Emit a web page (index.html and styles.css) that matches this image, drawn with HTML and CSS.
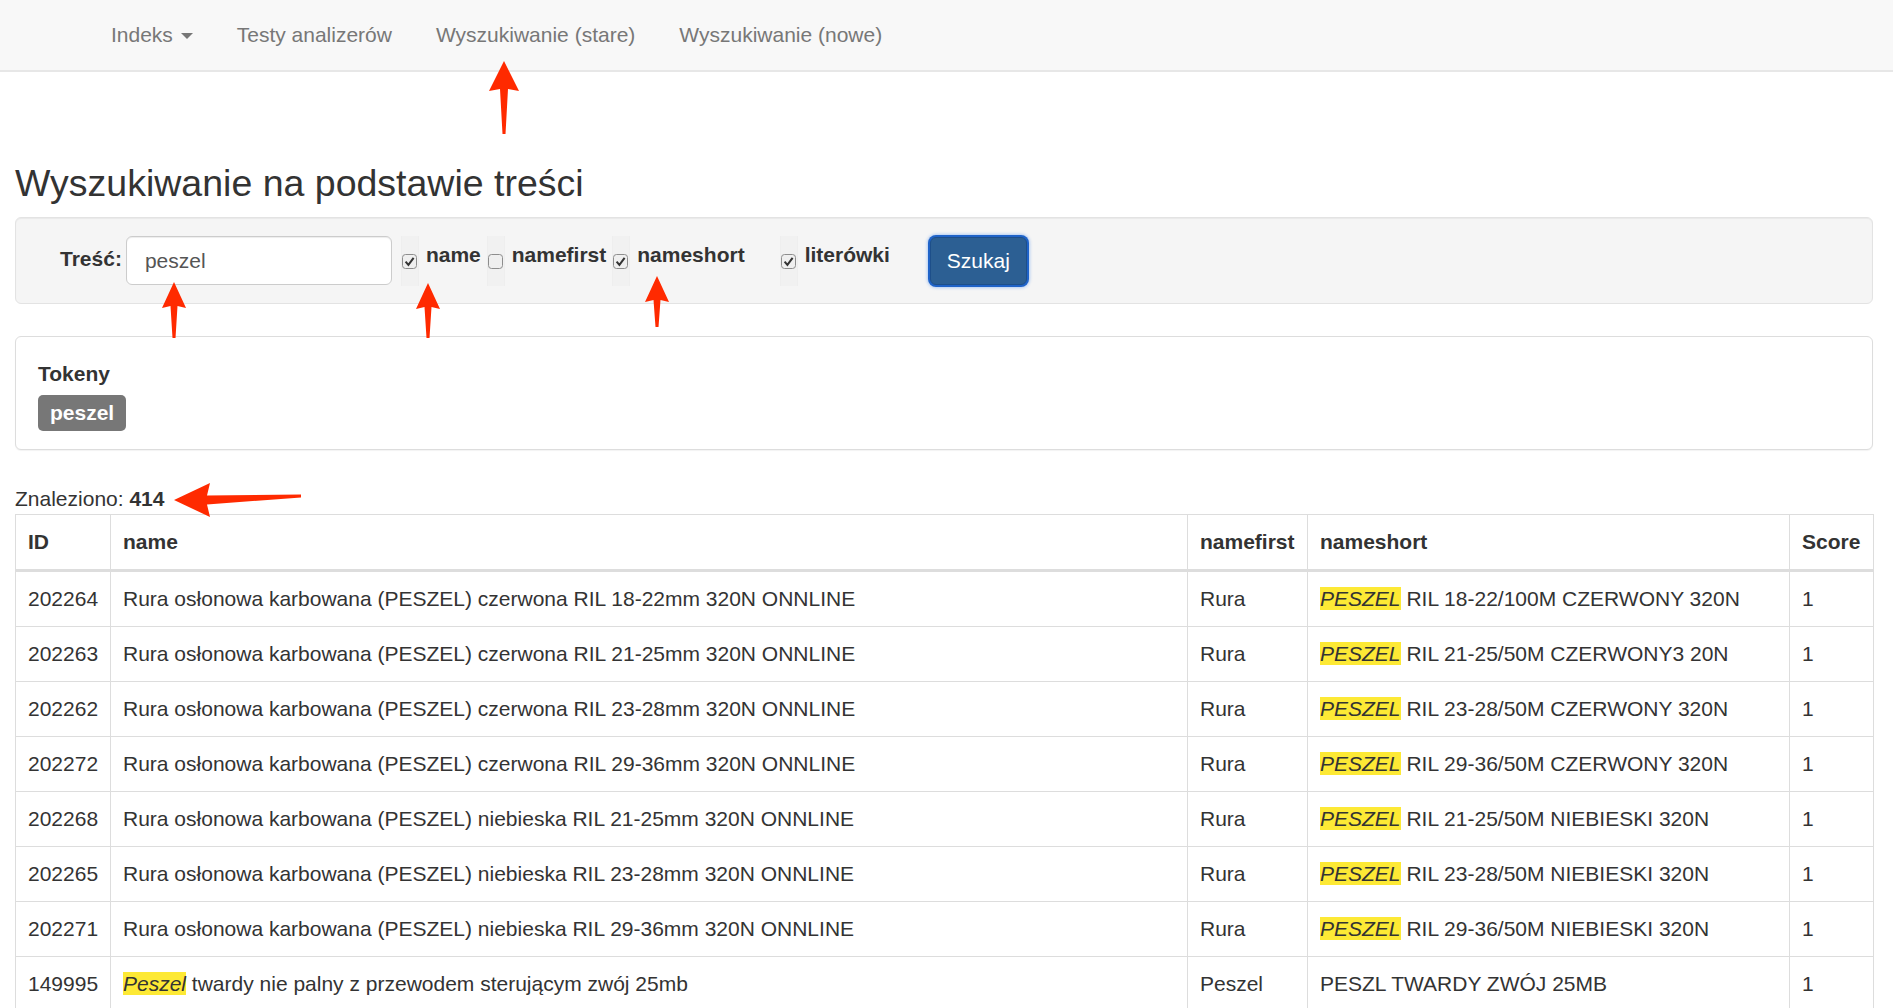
FILE: index.html
```html
<!DOCTYPE html>
<html lang="pl">
<head>
<meta charset="utf-8">
<title>Wyszukiwanie</title>
<link rel="stylesheet" href="styles.css">
</head>
<body>
<nav class="navbar">
  <ul class="nav">
    <li><a href="#">Indeks <span class="caret"></span></a></li>
    <li><a href="#">Testy analizerów</a></li>
    <li><a href="#">Wyszukiwanie (stare)</a></li>
    <li><a href="#">Wyszukiwanie (nowe)</a></li>
  </ul>
</nav>

<main class="page">
  <h3 class="title">Wyszukiwanie na podstawie treści</h3>

  <form class="well">
    <label class="lbl">Treść:</label>
    <div class="input">peszel</div>
    <span class="cbwrap"><svg class="cb" viewBox="0 0 15 15"><rect x=".5" y=".5" width="14" height="14" rx="3" fill="#efefef" stroke="#8d8d8d"/><path d="M3.6 7.6 L6.4 10.9 L11.6 3.9" fill="none" stroke="#333" stroke-width="2"/></svg></span>
    <span class="cblabel">name</span>
    <span class="cbwrap"><svg class="cb" viewBox="0 0 15 15"><rect x=".5" y=".5" width="14" height="14" rx="3" fill="#efefef" stroke="#8d8d8d"/></svg></span>
    <span class="cblabel">namefirst</span>
    <span class="cbwrap"><svg class="cb" viewBox="0 0 15 15"><rect x=".5" y=".5" width="14" height="14" rx="3" fill="#efefef" stroke="#8d8d8d"/><path d="M3.6 7.6 L6.4 10.9 L11.6 3.9" fill="none" stroke="#333" stroke-width="2"/></svg></span>
    <span class="cblabel wide">nameshort</span>
    <span class="cbwrap"><svg class="cb" viewBox="0 0 15 15"><rect x=".5" y=".5" width="14" height="14" rx="3" fill="#efefef" stroke="#8d8d8d"/><path d="M3.6 7.6 L6.4 10.9 L11.6 3.9" fill="none" stroke="#333" stroke-width="2"/></svg></span>
    <span class="cblabel wide">literówki</span>
    <button type="button" class="btn">Szukaj</button>
  </form>

  <section class="panel">
    <div class="panel-title">Tokeny</div>
    <span class="badge">peszel</span>
  </section>

  <p class="found">Znaleziono: <b>414</b></p>

  <table class="results">
    <colgroup>
      <col class="c-id"><col class="c-name"><col class="c-first"><col class="c-short"><col class="c-score">
    </colgroup>
    <thead>
      <tr><th>ID</th><th>name</th><th>namefirst</th><th>nameshort</th><th>Score</th></tr>
    </thead>
    <tbody>
      <tr><td>202264</td><td>Rura osłonowa karbowana (PESZEL) czerwona RIL 18-22mm 320N ONNLINE</td><td>Rura</td><td><em class="hl">PESZEL</em> RIL 18-22/100M CZERWONY 320N</td><td>1</td></tr>
      <tr><td>202263</td><td>Rura osłonowa karbowana (PESZEL) czerwona RIL 21-25mm 320N ONNLINE</td><td>Rura</td><td><em class="hl">PESZEL</em> RIL 21-25/50M CZERWONY3 20N</td><td>1</td></tr>
      <tr><td>202262</td><td>Rura osłonowa karbowana (PESZEL) czerwona RIL 23-28mm 320N ONNLINE</td><td>Rura</td><td><em class="hl">PESZEL</em> RIL 23-28/50M CZERWONY 320N</td><td>1</td></tr>
      <tr><td>202272</td><td>Rura osłonowa karbowana (PESZEL) czerwona RIL 29-36mm 320N ONNLINE</td><td>Rura</td><td><em class="hl">PESZEL</em> RIL 29-36/50M CZERWONY 320N</td><td>1</td></tr>
      <tr><td>202268</td><td>Rura osłonowa karbowana (PESZEL) niebieska RIL 21-25mm 320N ONNLINE</td><td>Rura</td><td><em class="hl">PESZEL</em> RIL 21-25/50M NIEBIESKI 320N</td><td>1</td></tr>
      <tr><td>202265</td><td>Rura osłonowa karbowana (PESZEL) niebieska RIL 23-28mm 320N ONNLINE</td><td>Rura</td><td><em class="hl">PESZEL</em> RIL 23-28/50M NIEBIESKI 320N</td><td>1</td></tr>
      <tr><td>202271</td><td>Rura osłonowa karbowana (PESZEL) niebieska RIL 29-36mm 320N ONNLINE</td><td>Rura</td><td><em class="hl">PESZEL</em> RIL 29-36/50M NIEBIESKI 320N</td><td>1</td></tr>
      <tr><td>149995</td><td><em class="hl">Peszel</em> twardy nie palny z przewodem sterującym zwój 25mb</td><td>Peszel</td><td>PESZL TWARDY ZWÓJ 25MB</td><td>1</td></tr>
    </tbody>
  </table>
</main>

<svg class="annotations" viewBox="0 0 1893 1008" aria-hidden="true">
  <g fill="#ff2a00">
    <polygon points="504,61 519,91 508,89 505.5,134 502.5,134 500,89 489,91"/>
    <polygon points="174,282 186,308 177.5,306 175.5,338 172.5,338 170.5,306 162,308"/>
    <polygon points="428,283 440,309 431.5,307 429.5,338 426.5,338 424.5,307 416,309"/>
    <polygon points="657,276 669,302 660.5,300 658.5,327 655.5,327 653.5,300 645,302"/>
    <polygon points="174,500 210,483 207,495.5 301,494.5 301,497.5 207,504.5 210,517"/>
  </g>
</svg>
</body>
</html>
```

FILE: styles.css
```css
html {
  overflow: hidden;
}

body {
  margin: 0;
  position: relative;
  font-family: "Liberation Sans", Arial, sans-serif;
  font-size: 21px;
  line-height: 30px;
  color: #333;
  background: #fff;
}

/* Navbar */
.navbar {
  height: 70px;
  background: #f8f8f8;
  border-bottom: 2px solid #e7e7e7;
}

.nav {
  list-style: none;
  margin: 0;
  padding: 0 0 0 89px;
  display: flex;
  height: 70px;
  align-items: center;
}

.nav a {
  display: block;
  padding: 20px 22px;
  color: #777;
  text-decoration: none;
}

.caret {
  display: inline-block;
  width: 0;
  height: 0;
  margin-left: 2px;
  vertical-align: middle;
  border-top: 6px solid #777;
  border-left: 6px solid transparent;
  border-right: 6px solid transparent;
}

/* Page */
.page {
  padding: 91px 20px 0 15px;
}

.title {
  margin: 0 0 13px;
  font-size: 37.5px;
  line-height: 41px;
  font-weight: normal;
  color: #333;
}

/* Search form */
.well {
  display: flex;
  align-items: center;
  height: 85px;
  padding: 0 0 0 44px;
  background: #f5f5f5;
  border: 1px solid #e3e3e3;
  border-radius: 6px;
  box-shadow: inset 0 1px 1px rgba(0, 0, 0, 0.05);
  margin: 0;
}

.lbl {
  font-weight: bold;
  margin-right: 4px;
  position: relative;
  top: -2px;
}

.input {
  box-sizing: border-box;
  width: 266px;
  height: 49px;
  padding: 9px 18px;
  background: #fff;
  border: 1px solid #ccc;
  border-radius: 6px;
  box-shadow: inset 0 1px 1px rgba(0, 0, 0, 0.075);
  color: #555;
  margin-right: 9px;
}

.cbwrap {
  box-sizing: border-box;
  width: 18px;
  height: 50px;
  display: flex;
  align-items: center;
  background: #f1f1f1;
  border-left: 1px solid #eee;
  border-right: 1px solid #eee;
}

.cb {
  width: 15px;
  height: 15px;
  display: block;
  position: relative;
  top: 1px;
}

.cblabel {
  font-weight: bold;
  margin: 0 6px 0 7px;
  position: relative;
  top: -6px;
}

.cblabel.wide {
  margin-right: 35px;
}

.btn {
  box-sizing: border-box;
  width: 97px;
  height: 48px;
  margin-left: 5px;
  padding: 0;
  font-family: inherit;
  font-size: 21px;
  color: #fff;
  background: #2c5f93;
  border: 1px solid #1d4f8a;
  border-radius: 6px;
  box-shadow: 0 0 0 2px #1f63c8, 0 0 3px 3px rgba(90, 150, 240, 0.45);
}

/* Tokens panel */
.panel {
  margin-top: 32px;
  padding: 22px 22px 18px;
  border: 1px solid #ddd;
  border-radius: 6px;
  background: #fff;
  box-shadow: 0 1px 1px rgba(0, 0, 0, 0.05);
}

.panel-title {
  font-weight: bold;
  margin-bottom: 6px;
}

.badge {
  display: inline-block;
  padding: 3px 12px;
  background: #777;
  color: #fff;
  font-weight: bold;
  border-radius: 5px;
}

.found {
  margin: 34px 0 0;
}

/* Results table */
.results {
  width: 100%;
  table-layout: fixed;
  border-collapse: collapse;
  border: 1px solid #ddd;
}

.c-id { width: 95px; }
.c-name { width: 1077px; }
.c-first { width: 120px; }
.c-short { width: 482px; }
.c-score { width: 84px; }

.results th,
.results td {
  padding: 12px;
  border: 1px solid #ddd;
  text-align: left;
  vertical-align: top;
  white-space: nowrap;
  overflow: hidden;
}

.results th {
  vertical-align: bottom;
  border-bottom: 3px solid #ddd;
  font-weight: bold;
}

.hl {
  background: #fde935;
  font-style: italic;
}

/* Annotation arrows */
.annotations {
  position: absolute;
  top: 0;
  left: 0;
  width: 1893px;
  height: 1008px;
  pointer-events: none;
}
```
